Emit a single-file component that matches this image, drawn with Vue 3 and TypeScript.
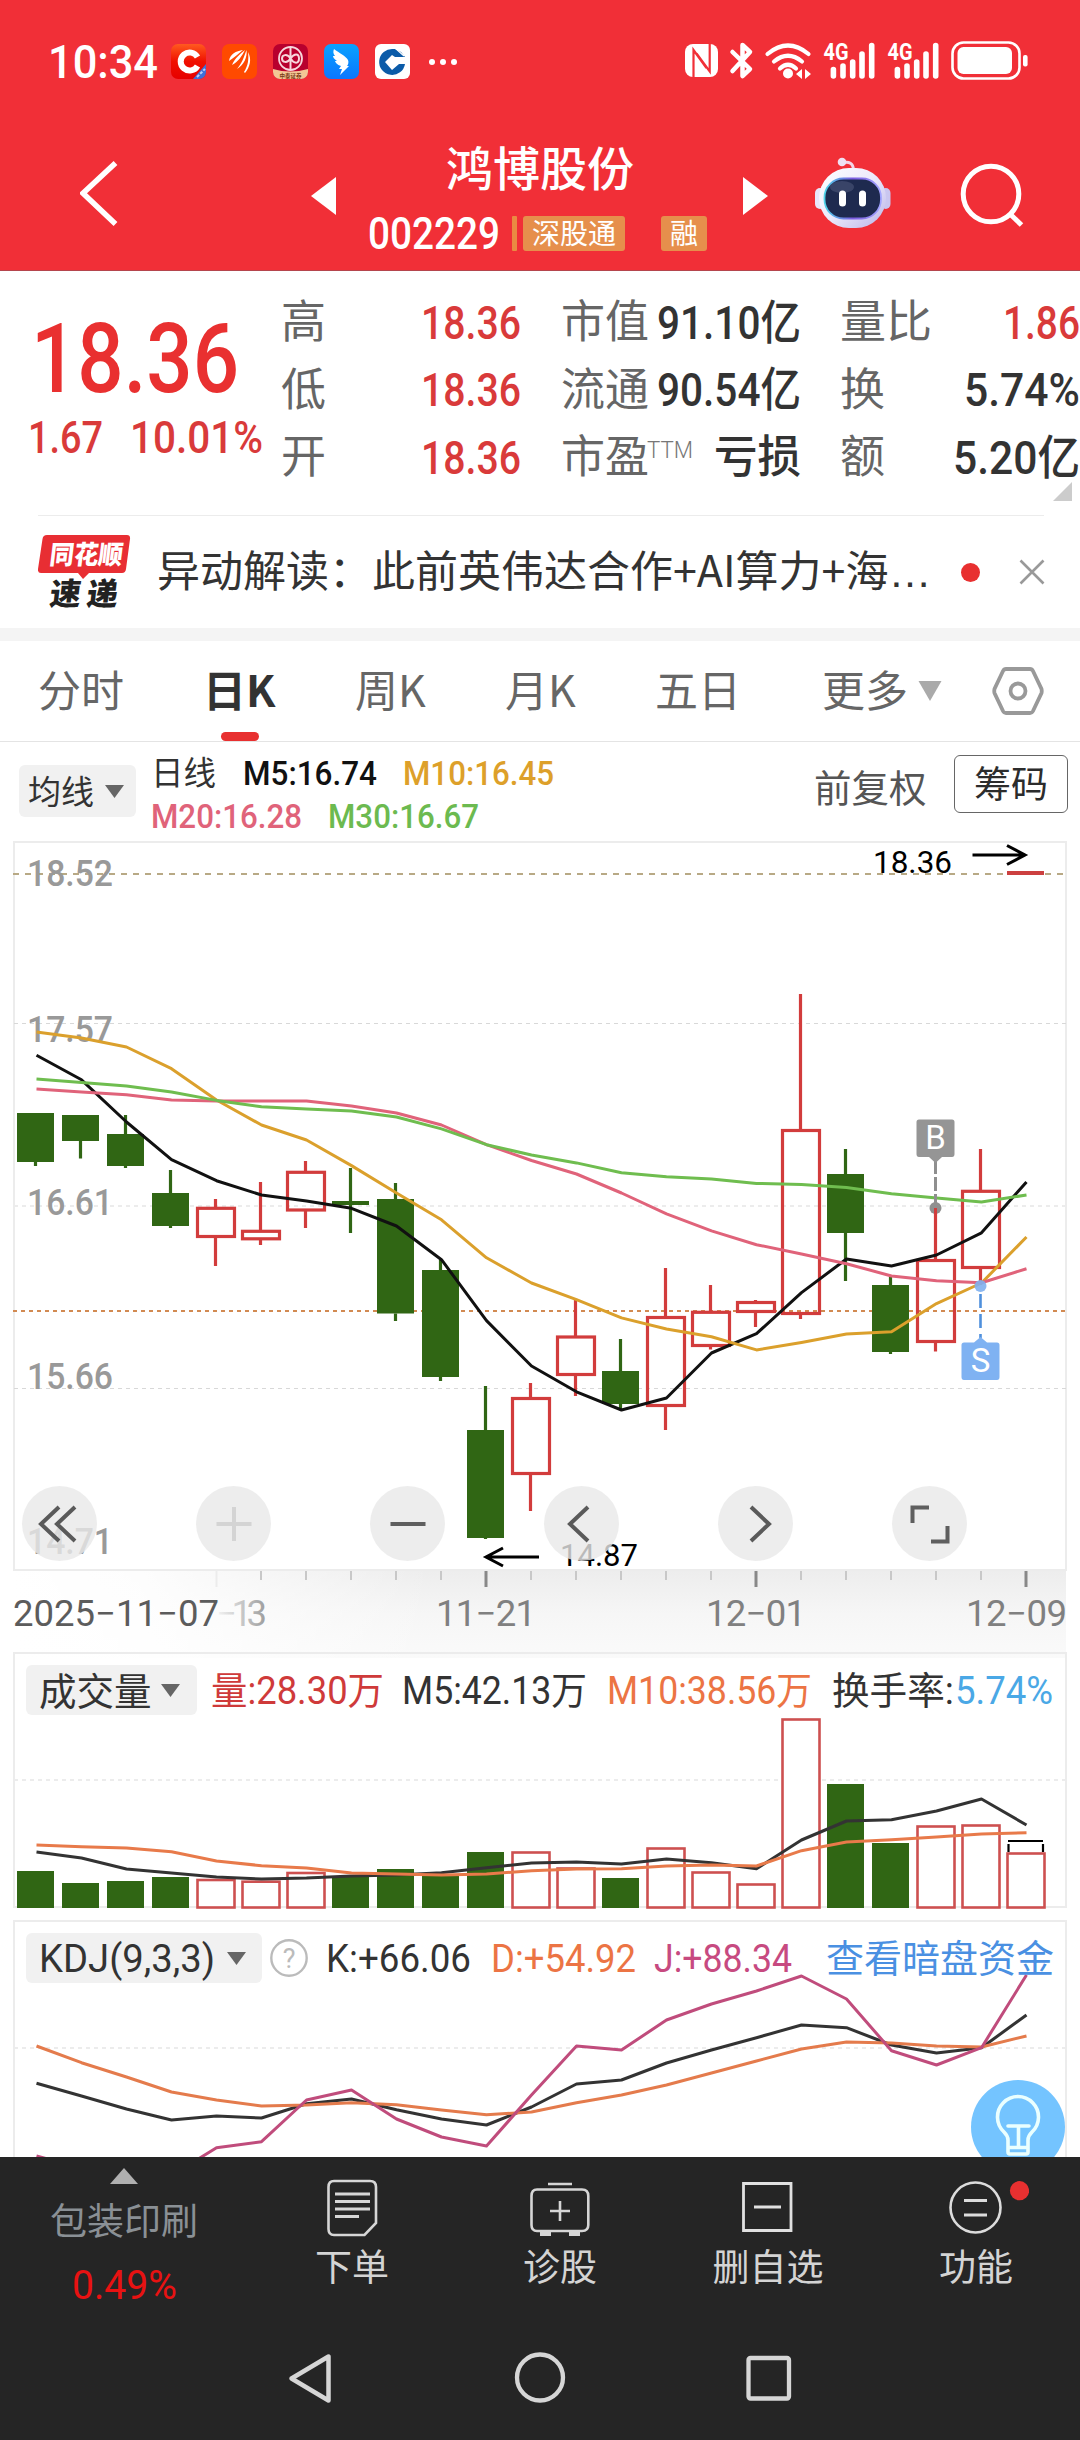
<script setup lang="ts">
import { h } from 'vue'

interface FitProps { t: string; w: number; s: number; c?: string; b?: number | string }

/* Text run with a fixed advance width; the box is the cap height of the run. */
const Fit = (p: FitProps) =>
  h('svg', { class: 'fit', width: p.w, height: Math.round(p.s * 0.711) }, [
    h('text', {
      x: 0, y: Math.round(p.s * 0.711), textLength: p.w, lengthAdjust: 'spacingAndGlyphs',
      'font-size': p.s, 'font-weight': p.b ?? 400, fill: p.c ?? '#333',
    }, p.t),
  ])
Fit.props = ['t', 'w', 's', 'c', 'b']

const RED = '#d93a3a'
const GREEN = '#306614'

interface Stat { k: string; kw: number; v: string; w: number; c?: string; sup?: string }
const stats: Stat[][] = [
  [
    { k: '高', kw: 45, v: '18.36', w: 100, c: RED },
    { k: '低', kw: 45, v: '18.36', w: 100, c: RED },
    { k: '开', kw: 45, v: '18.36', w: 100, c: RED },
  ],
  [
    { k: '市值', kw: 88, v: '91.10亿', w: 144 },
    { k: '流通', kw: 88, v: '90.54亿', w: 144 },
    { k: '市盈', kw: 88, v: '亏损', w: 87, sup: 'TTM' },
  ],
  [
    { k: '量比', kw: 92, v: '1.86', w: 77, c: RED },
    { k: '换', kw: 45, v: '5.74%', w: 116 },
    { k: '额', kw: 45, v: '5.20亿', w: 127 },
  ],
]

/* up flag, body top, body bottom, high, low, volume top */
type Candle = [number, number, number, number, number, number]
const candles: Candle[] = [
  [0, 1113, 1162, 1113, 1166, 1871],
  [0, 1115, 1141, 1115, 1158.5, 1883],
  [0, 1134, 1166, 1115, 1168, 1881],
  [0, 1193, 1226, 1170, 1228, 1877],
  [1, 1208.3, 1236.5, 1199, 1266, 1880],
  [1, 1231.3, 1238.8, 1182, 1245, 1881.7],
  [1, 1172.3, 1210, 1161, 1228, 1873],
  [0, 1201, 1205, 1168, 1233, 1877],
  [0, 1199, 1313.5, 1183, 1321, 1869],
  [0, 1270, 1377, 1260, 1381, 1874],
  [0, 1430, 1538, 1386, 1539, 1852],
  [1, 1398.5, 1473.5, 1383, 1511, 1852.5],
  [1, 1337, 1374.5, 1300, 1396, 1868.5],
  [0, 1371, 1404, 1339, 1410, 1878],
  [1, 1317.5, 1405.5, 1268, 1430, 1848.5],
  [1, 1312.3, 1345.5, 1285, 1349.5, 1872.5],
  [1, 1302.5, 1311.5, 1300, 1327, 1884.5],
  [1, 1130.5, 1313.5, 994, 1319, 1719.5],
  [0, 1174, 1233, 1149, 1281, 1784],
  [0, 1285, 1352, 1277, 1354, 1843],
  [1, 1260.5, 1341.5, 1208, 1351.5, 1826.5],
  [1, 1191.3, 1267.5, 1149, 1285, 1825.5],
  [1, 0, 0, 0, 0, 1853.5],
]
const cx = (i: number) => 35.5 + 45 * i
const priced = candles.slice(0, 22)

const pts = (ys: number[]) => ys.map((y, i) => `${36.5 + 45 * i},${y}`).join(' ')

const ma5 = pts([1055.3, 1079.8, 1122, 1159.7, 1180.7, 1195, 1201, 1208.3, 1226, 1259.7, 1320.6, 1366, 1391.8, 1410, 1398, 1353, 1333.7, 1292.6, 1259, 1266, 1255, 1232.8, 1182])
const ma10 = pts([1032, 1038, 1047, 1068.7, 1100, 1125, 1140, 1165.6, 1193, 1219.8, 1257.8, 1283, 1299.7, 1317.9, 1329, 1336.8, 1349.9, 1342.4, 1334, 1331.7, 1303.6, 1283, 1237])
const ma20 = pts([1089, 1092, 1094.8, 1100, 1101, 1101, 1101, 1106, 1113, 1125, 1144.7, 1160.5, 1174, 1193, 1213.9, 1230.9, 1244.7, 1254, 1263.7, 1276, 1280.7, 1282.7, 1268.8])
const ma30 = pts([1079, 1082.6, 1086, 1092, 1100.4, 1106.7, 1109, 1111, 1117, 1128.9, 1144.7, 1155, 1162.9, 1172.7, 1176.7, 1179, 1183.4, 1184.6, 1187.4, 1193.7, 1198, 1202, 1195])
const vm5 = pts([1852, 1858, 1869, 1873, 1877, 1879, 1878, 1876, 1875, 1872.7, 1867.7, 1863, 1862, 1864, 1859, 1862.7, 1868.7, 1840, 1821, 1819.7, 1811, 1799, 1825])
const vm10 = pts([1845, 1846.7, 1848, 1851.7, 1861, 1865.7, 1868, 1873, 1874, 1875, 1874, 1870.7, 1869, 1868.7, 1866, 1865, 1866, 1850.7, 1842, 1839.7, 1837, 1834, 1832.7])
const kLine = pts([2083.3, 2096, 2109, 2120, 2116, 2118, 2103.7, 2099, 2109.7, 2119, 2125, 2107, 2084, 2080, 2063, 2050, 2037.7, 2025, 2027.7, 2045, 2053, 2047.7, 2015])
const dLine = pts([2046, 2062.7, 2077, 2092, 2100, 2106, 2105, 2102.7, 2104.7, 2110, 2114.7, 2112, 2102.7, 2095, 2085, 2073, 2061, 2049, 2042, 2043, 2046, 2047, 2036])
const jLine = pts([2156, 2168, 2172, 2175.6, 2147.7, 2141.7, 2100, 2090, 2119, 2137, 2146, 2095, 2046, 2050, 2020, 2004, 1991, 1976, 1999, 2050.7, 2065, 2047.7, 1975])

const priceLabels = [
  { t: '18.52', y: 886 }, { t: '17.57', y: 1042 }, { t: '16.61', y: 1215 },
  { t: '15.66', y: 1389 }, { t: '14.71', y: 1554 },
]
const minorTicks = Array.from({ length: 19 }, (_, k) => k + 4).filter((i) => ![10, 16, 22].includes(i))
const majorTicks = [10, 16, 22]

const tools: { d: string; c: string }[] = [
  { d: 'M37 21L19 38L37 55M53 21L35 38L53 55', c: '#5a5a5a' },
  { d: 'M20.500 38H55.500M38 21V55', c: '#d4d4d4' },
  { d: 'M20.500 38H55.500', c: '#5f5f5f' },
  { d: 'M44 21L26 38L44 55', c: '#5a5a5a' },
  { d: 'M33 21L51 38L33 55', c: '#5a5a5a' },
  { d: 'M37 21.500H20.500V37M55.500 40V55.500H39', c: '#5f5f5f' },
]
</script>

<template>
  <div class="app">
    <header class="top">
      <div class="status">
        <Fit t="10:34" :w="110" :s="47" c="#fff" b="500" />
        <div class="apps">
          <svg width="35" height="35" viewBox="0 0 35 35">
            <defs>
              <linearGradient id="ga" x1="0" y1="0" x2="0" y2="1"><stop offset="0" stop-color="#ff5a1f" /><stop offset=".5" stop-color="#f01000" /><stop offset="1" stop-color="#e60000" /></linearGradient>
              <clipPath id="ca"><rect width="35" height="35" rx="7" /></clipPath>
            </defs>
            <g clip-path="url(#ca)">
              <rect width="35" height="35" fill="url(#ga)" />
              <path d="M26.500 13A9 9 0 1 0 26.500 22" fill="none" stroke="#fff" stroke-width="6" />
              <path d="M35 20V35H22Z" fill="#3f6fd8" />
              <path d="M26 33L34 25" stroke="#b9cdf5" stroke-width="2" stroke-dasharray="3 1.500" />
            </g>
          </svg>
          <svg width="35" height="35" viewBox="0 0 35 35">
            <rect width="35" height="35" rx="7" fill="#ff4a00" />
            <path d="M7 17C8 10 14 7 21 6C17 9 13 13 7 17ZM10 21C13 14 18 10 23 6C20 12 16 18 10 21ZM15 25C20 19 22 13 24.500 6C25.500 13 22 21 15 25ZM22 28C26 22 27 15 26 8C30 15 28 23 23 29Z" fill="#fff" />
          </svg>
          <svg width="35" height="35" viewBox="0 0 35 35">
            <clipPath id="cc"><rect width="35" height="35" rx="7" /></clipPath>
            <g clip-path="url(#cc)">
              <rect width="35" height="35" fill="#b8002e" />
              <path d="M0 25Q17 30 35 25V35H0Z" fill="#f3c795" />
              <circle cx="17.500" cy="14.500" r="11.500" fill="none" stroke="#f7d6dc" stroke-width="1.800" />
              <path d="M17.500 3V26M17.500 14.500C14 9 9 11 9 14.500S14 20 17.500 14.500S26 9 26 14.500S21 20 17.500 14.500" fill="none" stroke="#f7d6dc" stroke-width="2" />
              <text x="17.500" y="33.500" font-size="5.500" font-weight="700" text-anchor="middle" fill="#7a3a14">中泰证券</text>
            </g>
          </svg>
          <svg width="35" height="35" viewBox="0 0 35 35">
            <defs><linearGradient id="gd" x1="0" y1="0" x2="0" y2="1"><stop offset="0" stop-color="#0aa2ff" /><stop offset="1" stop-color="#0b76ff" /></linearGradient></defs>
            <rect width="35" height="35" rx="7" fill="url(#gd)" />
            <path d="M10 5C15 9 22 12 24 16C25 18 24 21 23 22H25L16 31L18 25H15L17 22C13 21 11 18 11 17H13C10 15 9 13 9 12H11C9 10 9 7 10 5Z" fill="#fff" />
          </svg>
          <svg width="35" height="35" viewBox="0 0 35 35">
            <rect width="35" height="35" rx="6" fill="#fff" />
            <path d="M18 5A13 13 0 1 0 30 20H24L17 26L10 18L17 11L20 13H30L26 8L20 5Z" fill="#0b5ba8" />
            <path d="M20 4L29 12" stroke="#fff" stroke-width="1.200" />
            <path d="M17 12L23 18L17 24L11 18Z" fill="#fff" />
          </svg>
        </div>
        <svg class="more" width="28" height="8" viewBox="0 0 28 8"><g fill="#fff"><circle cx="3" cy="4" r="3" /><circle cx="14" cy="4" r="3" /><circle cx="25" cy="4" r="3" /></g></svg>
        <svg class="sys" width="344" height="123" viewBox="685 0 344 123">
          <rect x="685" y="44" width="33" height="33" rx="8" fill="#fff" />
          <path d="M693.500 78V50L706.500 68M709.700 43V71.500L696.500 53.500" fill="none" stroke="#f12f37" stroke-width="2.200" />
          <path d="M732.500 52L750 69L742.500 76V45L750 52L732.500 71" fill="none" stroke="#fff" stroke-width="4.500" stroke-linecap="round" stroke-linejoin="round" />
          <g fill="none" stroke="#fff" stroke-width="4.200" stroke-linecap="round"><path d="M767.500 54Q788 37 808.500 54" /><path d="M774 61.500Q788 50 802 61.500" /><path d="M780 68.500Q788 61 796 68.500" /></g>
          <circle cx="788" cy="73.500" r="5" fill="#fff" />
          <path d="M796 74L802 69V79ZM811 74L805 69V79Z" fill="#fff" />
          <g v-for="o in [0, 64]" :key="o" :transform="`translate(${o} 0)`">
            <text x="823.500" y="60" font-size="24" font-weight="700" textLength="25" lengthAdjust="spacingAndGlyphs" fill="#fff">4G</text>
            <path d="M833.400 69.500V76M843 66V76M852.700 62V76M862 54V76M871.700 45.500V76" stroke="#fff" stroke-width="5.600" stroke-linecap="round" />
          </g>
          <rect x="952.500" y="42.500" width="67" height="36" rx="11" fill="none" stroke="#fff" stroke-width="2.600" />
          <rect x="957.500" y="47" width="54.500" height="27" rx="6" fill="#fff" />
          <rect x="1023" y="55" width="4.600" height="11.500" rx="2" fill="#fff" />
        </svg>
      </div>
      <div class="bar">
        <svg class="back" width="40" height="147" viewBox="80 123 40 147"><path d="M115.500 163L83 193.300L115.500 224" fill="none" stroke="#fff" stroke-width="5.500" /></svg>
        <svg class="prev" width="25" height="147" viewBox="311 123 25 147"><path d="M311 196L336 177V215Z" fill="#fff" /></svg>
        <div class="title">
          <Fit t="鸿博股份" :w="188" :s="47" c="#fff" b="500" />
          <div class="code">
            <Fit t="002229" :w="132" :s="44" c="#fff" b="500" />
            <i class="sliver"></i>
            <span class="tag wide"><Fit t="深股通" :w="84" :s="28" c="#fff" /></span>
            <span class="tag slim"><Fit t="融" :w="28" :s="28" c="#fff" /></span>
          </div>
        </div>
        <svg width="25" height="147" viewBox="743 123 25 147"><path d="M768 196L743 177V215Z" fill="#fff" /></svg>
        <svg class="robot" width="76" height="147" viewBox="815 123 76 147">
          <defs>
            <linearGradient id="rb" x1="0" y1="0" x2="1" y2="1"><stop offset="0" stop-color="#fff" /><stop offset=".5" stop-color="#ece9fb" /><stop offset="1" stop-color="#b9b4e8" /></linearGradient>
            <linearGradient id="rr" x1="0" y1="0" x2="1" y2="0"><stop offset="0" stop-color="#4fd2e8" /><stop offset=".5" stop-color="#7b5be0" /><stop offset="1" stop-color="#a3a6ff" /></linearGradient>
          </defs>
          <path d="M842 163Q853 160 853.500 170" fill="none" stroke="#f3d5e6" stroke-width="3" />
          <circle cx="842" cy="162" r="4.300" fill="#efe0f2" />
          <rect x="815" y="188" width="10" height="21" rx="5" fill="#e8e6fa" /><rect x="881" y="188" width="9.500" height="21" rx="5" fill="#c9c6f0" />
          <rect x="819" y="168" width="67" height="60" rx="30" fill="url(#rb)" />
          <rect x="824.500" y="178.500" width="56.500" height="40" rx="19" fill="#1e2a4f" stroke="url(#rr)" stroke-width="1.800" />
          <ellipse cx="842" cy="187" rx="12" ry="6" fill="#5b6488" opacity=".45" />
          <rect x="839" y="190.500" width="7" height="16" rx="3.500" fill="#fff" /><rect x="859" y="190.500" width="7" height="16" rx="3.500" fill="#fff" />
        </svg>
        <svg class="search" width="64" height="147" viewBox="960 123 64 147"><circle cx="991" cy="194" r="27.800" fill="none" stroke="#fff" stroke-width="5" /><path d="M1010 214L1021.500 225" stroke="#fff" stroke-width="5" /></svg>
      </div>
    </header>

    <section class="quote">
      <div class="price">
        <Fit class="big" t="18.36" :w="208" :s="96" c="#e93030" b="500" />
        <div class="delta"><Fit t="1.67" :w="75" :s="45" :c="RED" b="500" /><Fit t="10.01%" :w="133" :s="45" :c="RED" b="500" /></div>
      </div>
      <div v-for="(col, ci) in stats" :key="ci" class="col">
        <div v-for="s in col" :key="s.k" class="stat">
          <Fit :t="s.k" :w="s.kw" :s="45" c="#666" />
          <Fit v-if="s.sup" class="sup" :t="s.sup" :w="46" :s="23" c="#777" b="300" />
          <Fit class="val" :t="s.v" :w="s.w" :s="s.sup ? 45 : 47" :c="s.c ?? '#333'" b="500" />
        </div>
      </div>
      <svg class="corner" width="19" height="19"><path d="M19 0V19H0Z" fill="#ccc" /></svg>
    </section>

    <section class="news">
      <svg width="93" height="76" viewBox="39 533 93 76">
        <path d="M48 534H128Q131.500 534 131 538L127 568Q126.500 572 123 572H90L84 578L79 572H42Q38.500 572 39 568L43.500 538Q44 534 48 534Z" fill="#e82e33" />
        <g font-weight="900" transform="skewX(-7)">
          <text x="119" y="563" font-size="26" textLength="73" lengthAdjust="spacingAndGlyphs" fill="#fff">同花顺</text>
          <text x="124" y="604" font-size="31" textLength="31" lengthAdjust="spacingAndGlyphs" fill="#222">速</text>
          <text x="161" y="604" font-size="31" textLength="31" lengthAdjust="spacingAndGlyphs" fill="#222">递</text>
        </g>
      </svg>
      <p class="headline">异动解读：此前英伟达合作+AI算力+海<span class="dots">…</span></p>
      <i class="dot"></i>
      <svg width="26" height="26" viewBox="0 0 26 26"><path d="M1.500 1.500L24.500 24.500M24.500 1.500L1.500 24.500" stroke="#999" stroke-width="2.600" /></svg>
    </section>

    <nav class="tabs">
      <span class="tab t1">分时</span>
      <span class="tab on">日K<i class="pill"></i></span>
      <span class="tab t3">周K</span>
      <span class="tab t4">月K</span>
      <span class="tab t5">五日</span>
      <span class="tab t6">更多</span>
      <svg class="tri" width="24" height="20"><path d="M0.500 0H23.500L12 20Z" fill="#aaa" /></svg>
      <svg class="hex" width="52" height="52" viewBox="-26 -26 52 52"><path d="M-12 -22H12Q14 -22 15 -20L23.500 -2Q24 0 23.500 2L15 20Q14 22 12 22H-12Q-14 22 -15 20L-23.500 2Q-24 0 -23.500 -2L-15 -20Q-14 -22 -12 -22Z" fill="none" stroke="#999" stroke-width="3.800" /><circle r="7.500" fill="none" stroke="#999" stroke-width="3.800" /></svg>
    </nav>

    <div class="ma">
      <span class="chip avg"><b>均线</b><svg width="19" height="13"><path d="M0 0H19L9.500 13Z" fill="#666" /></svg></span>
      <div class="avgs">
        <div class="line"><Fit t="日线" :w="65" :s="33" /><Fit class="m5" t="M5:16.74" :w="134" :s="34" c="#111" b="500" /><Fit class="m10" t="M10:16.45" :w="151" :s="34" c="#dda02a" b="500" /></div>
        <div class="line"><Fit t="M20:16.28" :w="151" :s="34" c="#e0637a" b="500" /><Fit class="m30" t="M30:16.67" :w="151" :s="34" c="#6cba50" b="500" /></div>
      </div>
      <span class="fq">前复权</span>
      <span class="cm">筹码</span>
    </div>

    <section class="kchart">
      <svg width="1080" height="817" viewBox="0 841 1080 817">
        <defs>
          <linearGradient id="ax" x1="0" y1="0" x2="0" y2="1"><stop offset="0" stop-color="#ededed" /><stop offset=".5" stop-color="#f6f6f6" /><stop offset="1" stop-color="#fafafa" /></linearGradient>
          <linearGradient id="fade" x1="0" y1="0" x2="1" y2="0"><stop offset="0" stop-color="#fff" /><stop offset=".3" stop-color="#fff" stop-opacity=".9" /><stop offset="1" stop-color="#fff" stop-opacity="0" /></linearGradient>
          <linearGradient id="ghost" gradientUnits="userSpaceOnUse" x1="212" y1="0" x2="266" y2="0"><stop offset="0" stop-color="#999" stop-opacity="0" /><stop offset="1" stop-color="#999" stop-opacity=".95" /></linearGradient>
        </defs>
        <rect x="14" y="1571" width="1052" height="87" fill="url(#ax)" />
        <rect x="13" y="1571" width="420" height="87" fill="url(#fade)" />
        <rect x="14" y="842" width="1052" height="728" fill="none" stroke="#ececec" stroke-width="2" />
        <g fill="none">
          <path d="M14 1023.500H1066M14 1388.500H1066" stroke="#d8d8d8" stroke-dasharray="4 4" />
          <path d="M14 1206H1066" stroke="#ececec" stroke-width="2" stroke-dasharray="4 4" />
          <path d="M13 874H1066" stroke="#b8a985" stroke-width="2" stroke-dasharray="6 6" />
          <path d="M13 1311H1066" stroke="#d28a52" stroke-width="2" stroke-dasharray="4 4" />
        </g>
        <g v-for="(c, i) in priced" :key="i" :stroke="c[0] ? '#d23c3c' : GREEN" stroke-width="3.200">
          <path v-if="c[3] < c[1]" :d="`M${cx(i)} ${c[3]}V${c[1]}`" />
          <path v-if="c[4] > c[2]" :d="`M${cx(i)} ${c[2]}V${c[4]}`" />
          <rect v-if="c[0]" :x="cx(i) - 18" :y="c[1]" width="37" :height="c[2] - c[1]" fill="none" />
          <rect v-else :x="cx(i) - 18.500" :y="c[1]" width="37" :height="c[2] - c[1]" :fill="GREEN" stroke="none" />
        </g>
        <path d="M1007 873H1044" stroke="#cc4040" stroke-width="4" />
        <g font-size="37.500" font-weight="500" fill="#999">
          <text v-for="l in priceLabels" :key="l.t" x="27" :y="l.y" textLength="86" lengthAdjust="spacingAndGlyphs">{{ l.t }}</text>
        </g>
        <g fill="none" stroke-width="3" stroke-linejoin="round">
          <polyline :points="ma5" stroke="#111" />
          <polyline :points="ma10" stroke="#dba02c" />
          <polyline :points="ma20" stroke="#e0637a" />
          <polyline :points="ma30" stroke="#6fbd4f" />
        </g>
        <g font-size="31" fill="#000">
          <text x="873" y="873" textLength="79" lengthAdjust="spacingAndGlyphs">18.36</text>
          <text x="560" y="1566" textLength="78" lengthAdjust="spacingAndGlyphs">14.87</text>
        </g>
        <path d="M972.500 855H1025M1007 845.500L1025 855L1007 864.500M539 1557H486M503 1548L486 1557L503 1566" fill="none" stroke="#000" stroke-width="3" />
        <g>
          <circle cx="935.500" cy="1208" r="6" fill="#8f8f8f" />
          <path d="M935.500 1208V1160" stroke="#8f8f8f" stroke-width="3" stroke-dasharray="14 3" />
          <path d="M919 1119.500H952Q954.500 1119.500 954.500 1122V1154Q954.500 1157 952 1157H942L935.500 1163L929 1157H919Q916.500 1157 916.500 1154V1122Q916.500 1119.500 919 1119.500Z" fill="#959595" />
          <text x="935.500" y="1149" font-size="33" text-anchor="middle" fill="#fff">B</text>
          <path d="M935.500 1208V1222" stroke="#d23c3c" stroke-width="3" />
          <circle cx="980.500" cy="1286" r="6" fill="#7fb0ee" opacity=".9" />
          <path d="M980.500 1294V1338" stroke="#4f90dc" stroke-width="2.600" stroke-dasharray="14 6" />
          <path d="M964 1342.500H974L980.500 1337L987 1342.500H997Q999.500 1342.500 999.500 1345V1377Q999.500 1380 997 1380H964Q961.500 1380 961.500 1377V1345Q961.500 1342.500 964 1342.500Z" fill="#7fb2f2" />
          <text x="980.500" y="1372" font-size="33" text-anchor="middle" fill="#fff">S</text>
        </g>
        <path d="M216.500 1571V1587" stroke="#ececec" stroke-width="2" />
        <path v-for="i in minorTicks.slice(1)" :key="'n' + i" :d="`M${36 + 45 * i} 1571V1580`" stroke="#c8c8c8" stroke-width="2" />
        <path v-for="i in majorTicks" :key="'m' + i" :d="`M${36 + 45 * i} 1571V1587`" stroke="#888" stroke-width="3" />
        <g font-size="36.500" fill="#808080">
          <text x="13" y="1626" textLength="206" fill="#5c5c5c">2025−11−07</text>
          <text x="216" y="1626" textLength="51" fill="url(#ghost)">−13</text>
          <text x="436" y="1626" textLength="100">11−21</text>
          <text x="706" y="1626" textLength="100">12−01</text>
          <text x="966" y="1626" textLength="101">12−09</text>
        </g>
      </svg>
      <div class="tools">
        <span v-for="(t, i) in tools" :key="i" class="tool"><svg width="76" height="76"><path :d="t.d" fill="none" :stroke="t.c" stroke-width="4" /></svg></span>
      </div>
    </section>

    <section class="sub vol">
      <svg width="1080" height="268" viewBox="0 1652 1080 268">
        <path d="M14 1907V1653H1066V1907Z" fill="none" stroke="#ececec" stroke-width="2" />
        <path d="M14 1780H1066" stroke="#ececec" stroke-width="2" stroke-dasharray="4 4" />
        <g v-for="(c, i) in candles" :key="i">
          <rect v-if="c[0]" :x="cx(i) - 18" :y="c[5]" width="37" :height="1907.500 - c[5]" fill="#fff" stroke="#cd5050" stroke-width="2.600" />
          <rect v-else :x="cx(i) - 18.500" :y="c[5]" width="37" :height="1908 - c[5]" :fill="GREEN" />
        </g>
        <path d="M1008 1841H1043M1008.500 1844V1852M1043 1844V1852" stroke="#000" stroke-width="2.200" />
        <g fill="none" stroke-width="3" stroke-linejoin="round"><polyline :points="vm5" stroke="#333" /><polyline :points="vm10" stroke="#e87a4a" /></g>
      </svg>
      <div class="legend">
        <span class="chip"><b>成交量</b><svg width="19" height="13"><path d="M0 0H19L9.500 13Z" fill="#666" /></svg></span>
        <Fit class="v1" t="量:28.30万" :w="173" :s="38" c="#cf3a3a" />
        <Fit class="v2" t="M5:42.13万" :w="185" :s="38" />
        <Fit class="v3" t="M10:38.56万" :w="205" :s="38" c="#ec7444" />
        <Fit class="v4" t="换手率:" :w="122" :s="38" />
        <Fit class="v5" t="5.74%" :w="98" :s="38" c="#4aa8e6" />
      </div>
    </section>

    <section class="sub kdj">
      <svg width="1080" height="237" viewBox="0 1920 1080 237">
        <path d="M14 2160V1921H1066V2160" fill="none" stroke="#ececec" stroke-width="2" />
        <path d="M14 2048H1066" stroke="#ececec" stroke-width="2" stroke-dasharray="4 4" />
        <g fill="none" stroke-width="3" stroke-linejoin="round"><polyline :points="kLine" stroke="#333" /><polyline :points="dLine" stroke="#e47b4c" /><polyline :points="jLine" stroke="#c04c7c" /></g>
        <circle cx="1018" cy="2127" r="47" fill="#74c4ff" />
        <path d="M1008 2152V2140Q1008 2136 1004 2132A20.500 20.500 0 1 1 1032 2132Q1028 2136 1028 2140V2152Q1028 2154 1026 2154H1010Q1008 2154 1008 2152ZM1008 2147.500H1028M1018.500 2147V2126M1008 2126H1029" fill="none" stroke="#eaffff" stroke-width="3.600" stroke-linecap="round" />
      </svg>
      <div class="legend">
        <span class="chip"><Fit t="KDJ(9,3,3)" :w="176" :s="38.5" /><svg width="19" height="13"><path d="M0 0H19L9.500 13Z" fill="#666" /></svg></span>
        <svg class="help" width="38" height="38" viewBox="-19 -19 38 38"><circle r="17.700" fill="none" stroke="#bbb" stroke-width="2.400" /><text x="0" y="9.500" font-size="27" text-anchor="middle" fill="#bbb">?</text></svg>
        <Fit class="k1" t="K:+66.06" :w="145" :s="38.5" />
        <Fit class="k2" t="D:+54.92" :w="145" :s="38.5" c="#ec7444" />
        <Fit class="k3" t="J:+88.34" :w="138" :s="38.5" c="#c74a80" />
        <Fit class="k4" t="查看暗盘资金" :w="228" :s="38" c="#4a90e2" />
      </div>
    </section>

    <footer class="foot">
      <div class="acts">
        <div class="ind">
          <svg width="28" height="16"><path d="M14 0L28 16H0Z" fill="#b0b0b0" /></svg>
          <span>包装印刷</span>
          <Fit t="0.49%" :w="105" :s="40" c="#e81212" />
        </div>
        <div class="act">
          <svg width="60" height="60" viewBox="-30 0 60 60"><path d="M-18 4H18Q24 4 24 10V46L12.500 58H-18Q-23.500 58 -23.500 52V10Q-23.500 4 -18 4Z" fill="none" stroke="#d6d6d6" stroke-width="2.600" /><path d="M-17 17H18M-17 24.500H18M-17 32H18M-17 39.500H7" stroke="#d6d6d6" stroke-width="3" /></svg>
          <span>下单</span>
        </div>
        <div class="act">
          <svg width="60" height="60" viewBox="-30 0 60 60"><path d="M-23 12.500H22Q28.300 12.500 28.300 19V48Q28.300 54 22 54H-23Q-28.500 54 -28.500 48V19Q-28.500 12.500 -23 12.500ZM-12 7H12M0 24V44M-10 34H10" fill="none" stroke="#d6d6d6" stroke-width="2.600" /><path d="M-20 57H-9M9 57H20" stroke="#d6d6d6" stroke-width="4" /></svg>
          <span>诊股</span>
        </div>
        <div class="act">
          <svg width="60" height="60" viewBox="-30 0 60 60"><path d="M-24.500 6.500H23V53.500H-24.500ZM-14 30H13" fill="none" stroke="#e0e0e0" stroke-width="2.800" /></svg>
          <span>删自选</span>
        </div>
        <div class="act">
          <svg width="106" height="60" viewBox="-53 0 106 60"><circle cx="-0.500" cy="30.500" r="25" fill="none" stroke="#dcdcdc" stroke-width="2.600" /><path d="M-12 23.500H11M-12 38H11" stroke="#dcdcdc" stroke-width="3" /><circle cx="43.500" cy="13.700" r="9.600" fill="#e83030" /></svg>
          <span>功能</span>
        </div>
      </div>
      <div class="sysnav">
        <svg width="50" height="56" viewBox="0 0 50 56"><path d="M6.500 28.500L43.500 6.500V50.500Z" fill="none" stroke="#d6d6d6" stroke-width="4.500" stroke-linejoin="round" /></svg>
        <svg width="52" height="56" viewBox="0 0 52 56"><circle cx="26" cy="27.500" r="23" fill="none" stroke="#d6d6d6" stroke-width="4.300" /></svg>
        <svg width="50" height="56" viewBox="0 0 50 56"><rect x="3.500" y="8" width="40.500" height="40.500" rx="2" fill="none" stroke="#d6d6d6" stroke-width="4.300" /></svg>
      </div>
    </footer>
  </div>
</template>

<style>
html, body { background: #fff; }
svg { display: block; flex: none; }
svg.fit { overflow: visible; }
svg text { font-family: Roboto, "Noto Sans CJK SC", sans-serif; }
</style>

<style scoped>
.app { width: 1080px; height: 2440px; overflow: hidden; display: flex; flex-direction: column; background: #fff; color: #333; font-family: "Noto Sans CJK SC", sans-serif; }
.top { background: #f12f37; height: 270px; border-bottom: 1px solid #b5454d; }
.status { height: 123px; display: flex; align-items: center; padding: 0 51px 0 48px; }
.apps { display: flex; gap: 16px; margin-left: 13px; }
.more { margin-left: 19px; }
.sys { margin-left: auto; }
.bar { height: 147px; display: flex; }
.back { margin-left: 80px; }
.prev { margin-left: 191px; }
.title { width: 407px; display: flex; flex-direction: column; align-items: center; padding-top: 30px; box-sizing: border-box; }
.code { display: flex; align-items: center; align-self: flex-start; height: 35px; margin: 30px 0 0 32px; }
.sliver { width: 5px; height: 35px; background: #ea8a42; margin: 0 6px 0 12px; border-radius: 1px; }
.tag { height: 35px; background: #e68f4c; border-radius: 3px; display: flex; align-items: center; justify-content: center; }
.wide { width: 102px; }
.slim { width: 46px; margin-left: 36px; }
.robot { margin-left: 47px; }
.search { margin-left: 69px; }

.quote { position: relative; height: 244px; display: flex; }
.price { width: 281px; flex: none; }
.big { margin: 53px 0 0 31px; }
.delta { display: flex; gap: 27px; margin: 29px 0 0 28px; }
.col { width: 240px; padding-top: 17.5px; margin-right: 39.5px; flex: none; }
.col:last-of-type { margin-right: 0; }
.stat { display: flex; align-items: center; height: 67.5px; }
.val { margin-left: auto; }
.sup { margin: -14px 0 0 -2px; }
.corner { position: absolute; left: 1053px; top: 211px; }

.news { height: 113px; margin: 0 36px 0 38px; border-top: 1px solid #ececec; display: flex; align-items: center; flex: none; box-sizing: border-box; }
.headline { margin: -4px 0 0 26px; width: 804px; flex: none; font-size: 43px; line-height: 60px; white-space: nowrap; }
.dots { font-family: "Liberation Sans", sans-serif; }
.dot { width: 19px; height: 19px; border-radius: 50%; background: #e83030; margin: 0 39px 0 0; flex: none; }

.tabs { height: 114px; box-sizing: border-box; border-top: 13px solid #f4f4f4; border-bottom: 1px solid #e4e4e4; display: flex; align-items: center; flex: none; font-size: 43px; color: #666; }
.tab { height: 100%; box-sizing: border-box; padding-bottom: 6px; display: flex; align-items: center; white-space: nowrap; flex: none; }
.t1 { margin-left: 38px; width: 165px; }
.t3 { width: 150px; }
.t4 { width: 150px; }
.t5 { width: 167px; }
.t6 { width: 96px; }
.on { position: relative; color: #333; font-weight: 700; width: 77px; margin-right: 75px; }
.pill { position: absolute; left: 18px; bottom: 0; width: 38px; height: 9px; border-radius: 5px; background: #e83030; }
.hex { margin-left: 50px; }

.ma { height: 99px; display: flex; flex: none; }
.chip { background: #f1f1f1; border-radius: 6px; display: flex; align-items: center; }
.chip b { font-weight: 400; margin-top: -3px; }
.avg { width: 117px; height: 52px; margin: 23px 0 0 19px; font-size: 33px; gap: 11px; padding-left: 9px; box-sizing: border-box; }
.avgs { margin-left: 15px; width: 663px; padding-top: 19px; }
.line { display: flex; align-items: center; height: 24px; margin-bottom: 19px; }
.m5 { margin-left: 27px; }
.m10 { margin-left: 26px; }
.m30 { margin-left: 26px; }
.fq { font-size: 37.500px; line-height: 54px; margin-top: 17px; color: #555; width: 140px; }
.cm { width: 112px; height: 56px; border: 1px solid #666; border-radius: 6px; margin-top: 13px; font-size: 37px; line-height: 52px; text-align: center; color: #2c2c2c; }

.kchart { height: 811px; display: grid; flex: none; }
.kchart > * { grid-area: 1 / 1; }
.tools { align-self: start; display: flex; gap: 99px; margin: 645px 0 0 22px; z-index: 1; }
.tool { width: 75px; height: 75px; border-radius: 50%; background: rgba(232, 232, 232, .8); }
.sub { display: grid; flex: none; overflow: hidden; }
.sub > * { grid-area: 1 / 1; }
.vol { height: 268px; }
.kdj { height: 237px; }
.legend { align-self: start; display: flex; align-items: center; height: 50px; margin: 13px 0 0 26px; font-size: 37.500px; }
.vol .chip { width: 171px; height: 50px; gap: 9px; padding-left: 13px; box-sizing: border-box; }
.kdj .chip { width: 236px; height: 50px; gap: 12px; padding-left: 13px; box-sizing: border-box; }
.v1 { margin-left: 14px; }
.v2 { margin-left: 18px; }
.v3 { margin-left: 20px; }
.v4 { margin-left: 20px; }
.v5 { margin-left: 1px; }
.help { margin-left: 8px; }
.k1 { margin-left: 18px; }
.k2 { margin-left: 20px; }
.k3 { margin-left: 18px; }
.k4 { margin-left: 34px; }

.foot { background: #252525; flex: 1; color: #d4d4d4; }
.acts { display: flex; height: 170px; }
.ind { width: 248px; display: flex; flex-direction: column; align-items: center; padding-top: 11px; box-sizing: border-box; font-size: 37px; line-height: 54px; color: #8a9095; }
.ind span { margin: 8px 0 25px; }
.act { width: 208px; display: flex; flex-direction: column; align-items: center; padding-top: 20px; font-size: 37px; line-height: 54px; box-sizing: border-box; }
.act span { margin-top: 1px; }
.sysnav { display: flex; margin: 23px 0 0 285px; }
.sysnav svg:nth-child(2) { margin: 0 179px; }
</style>
